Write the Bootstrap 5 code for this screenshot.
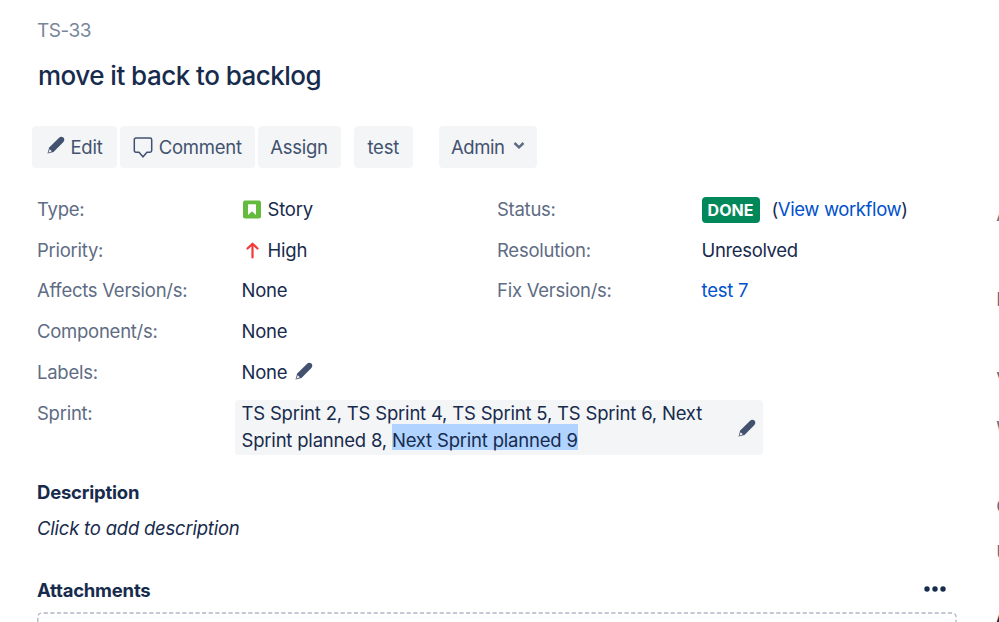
<!DOCTYPE html>
<html lang="en">
<head>
<meta charset="utf-8">
<meta name="viewport" content="width=device-width, initial-scale=1">
<title>TS-33 move it back to backlog</title>
<link href="https://cdn.jsdelivr.net/npm/bootstrap@5.3.0/dist/css/bootstrap.min.css" rel="stylesheet">
<style>
body{font-family:Inter,"Liberation Sans",sans-serif;font-size:18.5px;line-height:26.4px;letter-spacing:-.22px;color:#172b4d;background:#fff;height:622px;overflow:hidden}
.issue-main{width:958px;padding-left:37px}
.issue-key{color:#7a869a;margin-top:18px;font-size:19px;letter-spacing:-.5px}
.issue-title{font-size:26px;line-height:32px;font-weight:500;margin:16px 0 0 1px;letter-spacing:-.52px}
.issue-tools{margin:34px 0 0 -5px}
.issue-tools .btn{--bs-btn-color:#42526e;--bs-btn-bg:#f4f5f7;--bs-btn-border-color:#f4f5f7;--bs-btn-border-radius:4px;--bs-btn-padding-x:0;--bs-btn-padding-y:0;--bs-btn-font-size:18.5px;--bs-btn-line-height:26px;height:42px;letter-spacing:-.25px}
.w-edit{width:85px}.w-comment{width:134.5px;margin-left:3px}.w-assign{width:83px;margin-left:3px}.w-test{width:59.5px;margin-left:13px}.w-admin{width:97.5px;margin-left:26px}
.issue-tools .w-admin{letter-spacing:-.4px}
.gap-icon{gap:6px}
.issue-fields{margin-top:20.3px}
.field-row{height:40.9px;line-height:41px}
.field-name{color:#5e6c84;width:204.5px;flex:none;white-space:nowrap;letter-spacing:-.26px}
.col-left{width:460px}
.field-row a{color:#0052cc;text-decoration:none}
.status-tag{background:#00875a;color:#fff;font-weight:700;font-size:16px;line-height:26px;height:26px;width:58px;border-radius:4px;text-align:center;letter-spacing:0;margin-top:2px}
.workflow{margin-left:12px;letter-spacing:-.4px}
.unresolved{letter-spacing:-.35px}
.type-icon{margin-right:7px}
.sprint-box{width:528px;height:55px;background:#f4f5f7;border-radius:4px;margin-left:-6.5px;padding:0 7px 0 6.5px;margin-top:7.2px}
.sprint-text{white-space:nowrap;margin-top:-2px;letter-spacing:-.2px}
.sel-text{background:#b1d3ff;display:inline-block;line-height:19.2px;padding-top:6.8px;margin-top:-3px}
.sect{font-size:18.5px;line-height:26px;font-weight:700;margin:0}
.desc-head{margin-top:24px}
.desc-text{margin-top:10px}
.attach-head{margin-top:35.5px}
.more-icon{margin-right:11.5px}
.dropzone{height:10px;width:920px;margin-top:9px}
.side{width:2.8px;height:622px;overflow:hidden;flex:none;margin-left:38.2px;color:#5e6c84}
.side div{height:26px;line-height:26px;white-space:nowrap}
.side .s1{margin-top:201px}.side .s2{margin-top:58.5px}.side .s3{margin-top:54.5px}.side .s4{margin-top:22.5px}.side .s5{margin-top:52px}.side .s6{margin-top:20px}.side .s7{margin-top:37px;height:20px;font-weight:700;color:#172b4d}
svg{display:block;flex:none}
</style>
</head>
<body class="d-flex align-items-start">
<svg width="0" height="0" class="position-absolute"><defs>
<symbol id="pencil" viewBox="0 0 18 18"><path d="M2.2 11.5 12.1 1.7Q14.1-.1 16.4 1.6 18.2 3.7 16.4 6L6.5 15.9 .5 17.5Z" fill="#42526e"/><path d="M2.7 13.3 4.9 15.3 1.3 16.7Z" fill="#f4f5f7"/></symbol>
</defs></svg>
<main class="issue-main flex-shrink-0">
  <div class="issue-key">TS-33</div>
  <h1 class="issue-title">move it back to backlog</h1>
  <div class="issue-tools d-flex">
    <button class="btn w-edit gap-icon d-flex align-items-center justify-content-center"><svg width="18" height="18" class="mb-1"><use href="#pencil"/></svg><span>Edit</span></button>
    <button class="btn w-comment gap-icon d-flex align-items-center justify-content-center"><svg width="20" height="22" viewBox="0 0 20 22" fill="none" stroke="#42526e" stroke-width="1.5"><path d="M3 2H17Q18.700 2 18.700 3.700V14.500Q18.700 16.200 17 16.200H14L10 20.800 6 16.200H3Q1.300 16.200 1.300 14.500V3.700Q1.300 2 3 2Z"/></svg><span>Comment</span></button>
    <button class="btn w-assign">Assign</button>
    <button class="btn w-test">test</button>
    <button class="btn w-admin d-flex align-items-center justify-content-center"><span>Admin</span><svg width="12" height="8" viewBox="0 0 12 8" class="ms-2 mb-1" fill="none" stroke="#5e6c84" stroke-width="2.5"><path d="M1.500 2 6 6.300 10.500 2"/></svg></button>
  </div>
  <div class="issue-fields">
    <div class="d-flex">
      <div class="col-left">
        <div class="field-row d-flex"><div class="field-name">Type:</div><div class="d-flex align-items-center"><svg width="19" height="19" viewBox="0 0 19 19" class="type-icon"><rect x="1" y=".5" width="18" height="18" rx="2" fill="#63ba3c"/><path d="M6 5Q6 4.300 6.700 4.300H13.300Q14 4.300 14 5V15L10 11.300 6 15Z" fill="#fff"/></svg><span>Story</span></div></div>
        <div class="field-row d-flex"><div class="field-name">Priority:</div><div class="d-flex align-items-center"><svg width="19" height="19" viewBox="0 0 19 19" class="type-icon" fill="none" stroke="#ef3b3b" stroke-width="2.200" stroke-linecap="round" stroke-linejoin="round"><path d="M10.500 16.500V3.200M5.500 7.500 10.500 2.700 15.500 7.500"/></svg><span>High</span></div></div>
        <div class="field-row d-flex"><div class="field-name">Affects Version/s:</div><span>None</span></div>
        <div class="field-row d-flex"><div class="field-name">Component/s:</div><span>None</span></div>
        <div class="field-row d-flex"><div class="field-name">Labels:</div><div class="d-flex align-items-center"><span>None</span><svg width="18" height="18" class="ms-2 mb-1"><use href="#pencil"/></svg></div></div>
      </div>
      <div>
        <div class="field-row d-flex"><div class="field-name">Status:</div><div class="d-flex align-items-center"><span class="status-tag">DONE</span><span class="workflow">(<a href="#">View workflow</a>)</span></div></div>
        <div class="field-row d-flex"><div class="field-name">Resolution:</div><span class="unresolved">Unresolved</span></div>
        <div class="field-row d-flex"><div class="field-name">Fix Version/s:</div><a href="#">test 7</a></div>
      </div>
    </div>
    <div class="d-flex"><div class="field-name field-row">Sprint:</div>
      <div class="sprint-box d-flex align-items-center justify-content-between"><div class="sprint-text">TS Sprint 2, TS Sprint 4, TS Sprint 5, TS Sprint 6, Next<br>Sprint planned 8, <span class="sel-text">Next Sprint planned 9</span></div><svg width="18" height="18"><use href="#pencil"/></svg></div>
    </div>
  </div>
  <h2 class="sect desc-head">Description</h2>
  <div class="fst-italic desc-text">Click to add description</div>
  <div class="d-flex justify-content-between attach-head"><h2 class="sect">Attachments</h2><svg width="24" height="26" viewBox="0 0 24 26" fill="#172b4d" class="more-icon"><circle cx="4" cy="12" r="2.700"/><circle cx="12" cy="12" r="2.700"/><circle cx="20" cy="12" r="2.700"/></svg></div>
  <svg class="dropzone" viewBox="0 0 920 10" fill="none" stroke="#b0b6c3" stroke-width="1.300" stroke-dasharray="4.200 2.400"><path d="M.8 10V5Q.8 1 4.800 1H915Q919 1 919 5V10"/></svg>
</main>
<aside class="side">
  <div class="s1">Assignee:</div><div class="s2">Reporter:</div><div class="s3">Votes:</div><div class="s4">Watchers:</div><div class="s5">Created:</div><div class="s6">Updated:</div><div class="s7">Agile</div>
</aside>
<script src="https://cdn.jsdelivr.net/npm/bootstrap@5.3.0/dist/js/bootstrap.bundle.min.js"></script>
</body>
</html>
